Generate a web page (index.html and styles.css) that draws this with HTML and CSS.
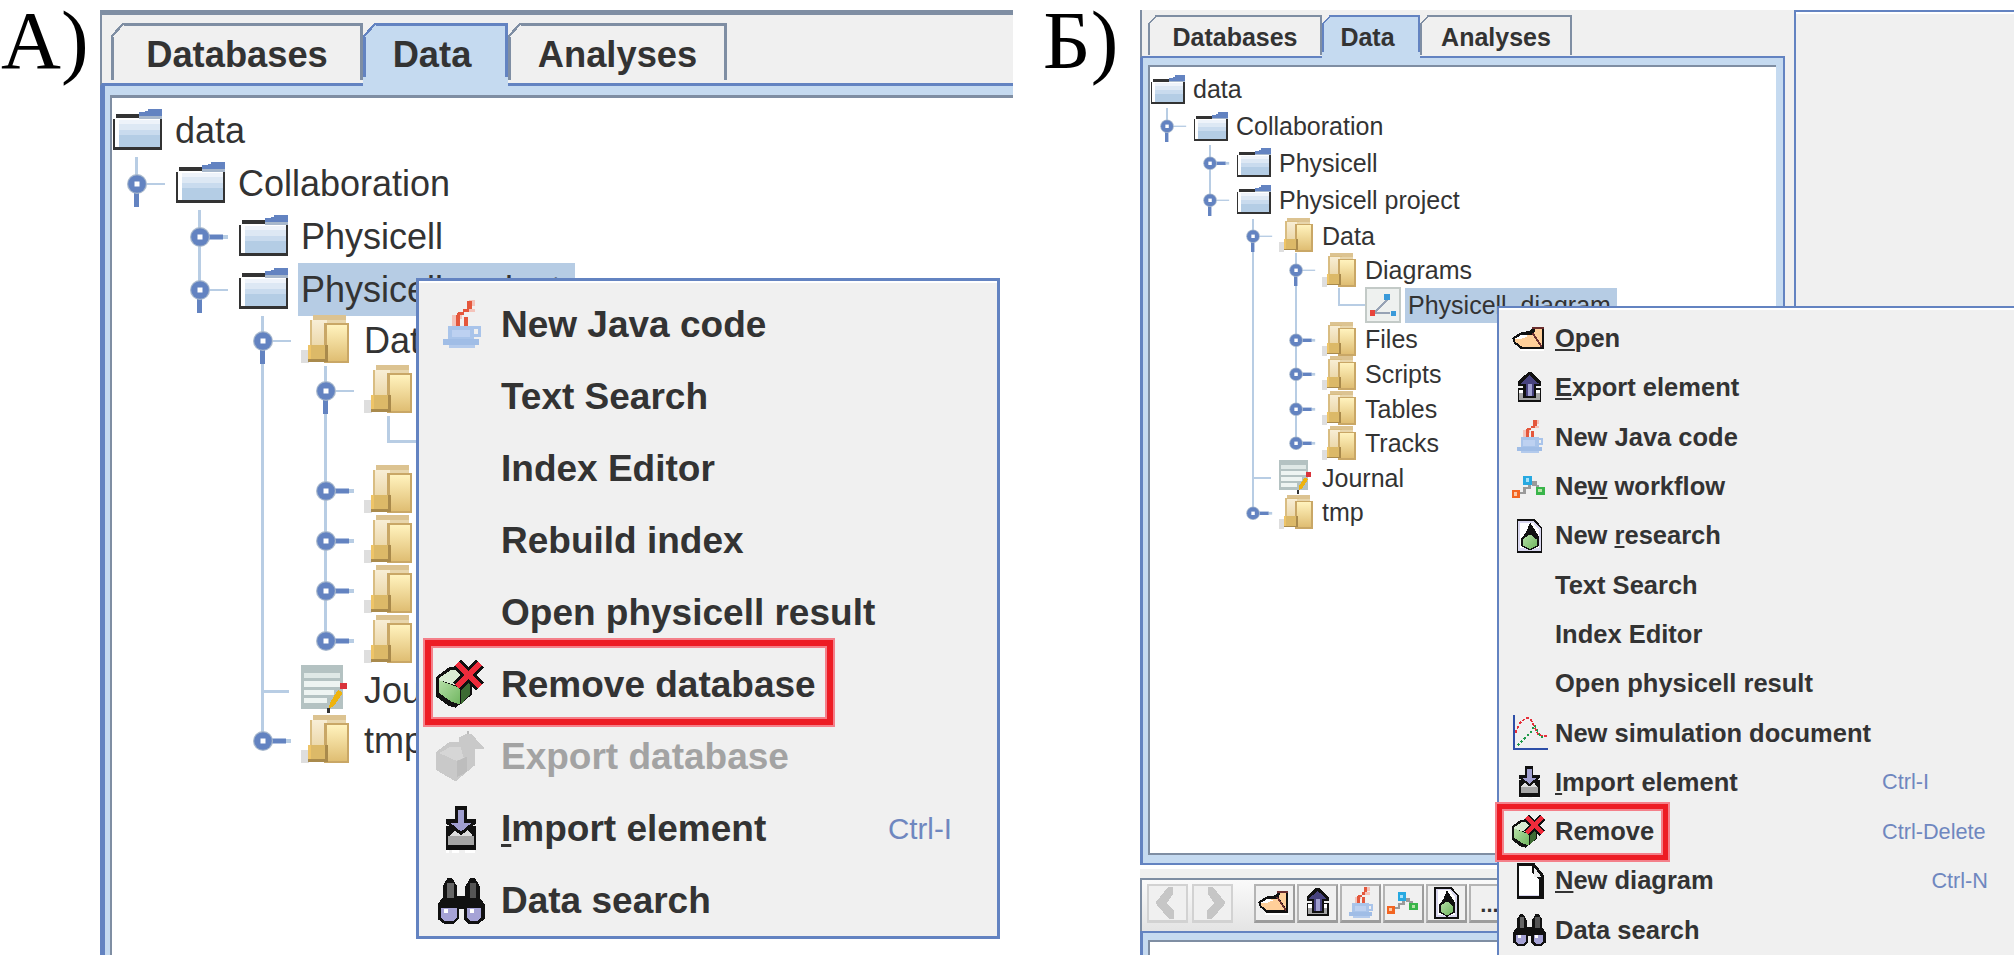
FILE: index.html
```html
<!DOCTYPE html>
<html lang="ru">
<head>
    <meta charset="UTF-8">
    <title>Удаление базы данных и элемента</title>
    <link rel="stylesheet" href="styles.css">
</head>
<body>

<!-- icons, drawn on a 16x16 grid like the original swing icons -->
<svg class="sprite" xmlns="http://www.w3.org/2000/svg">
    <defs>
        <linearGradient id="g-front" x1="0" y1="0" x2="0" y2="1">
            <stop offset="0" stop-color="#fff2bd"/>
            <stop offset="1" stop-color="#dfbd72"/>
        </linearGradient>
        <linearGradient id="g-back" x1="0" y1="0" x2="0" y2="1">
            <stop offset="0" stop-color="#f8eed6"/>
            <stop offset="1" stop-color="#e6cd94"/>
        </linearGradient>
        <linearGradient id="g-green" x1="0" y1="0" x2="1" y2="1">
            <stop offset="0" stop-color="#b5dfa6"/>
            <stop offset="1" stop-color="#6fb55f"/>
        </linearGradient>
    </defs>
    <symbol id="i-db" viewBox="0 0 16 16">
        <path fill="#333" d="M.3 4.600h1V3.200h7.500v1.400h6.500v9.400H.3z"/>
        <rect x="1" y="4.400" width="13.600" height="8.900" fill="#fff"/>
        <rect x="2" y="5" width="12.600" height="1" fill="#eef3fa"/>
        <rect x="2" y="6" width="12.600" height="2" fill="#dde8f4"/>
        <rect x="2" y="8" width="12.600" height="1.600" fill="#c9dbee"/>
        <rect x="2" y="9.600" width="12.600" height="3.700" fill="#b4cde5"/>
        <path fill="#a8b8cc" d="M8.400 3.600h6.900v1h-6.900z"/>
        <path fill="#6383c1" d="M8.400 3.800v-1.200h1.600v-.6h1v-.6h4.300v2.400z"/>
    </symbol>
    <symbol id="i-folder" viewBox="0 0 16 16">
        <rect x="-.3" y="10.800" width="2.700" height="4" fill="#dedede"/>
        <rect x="3.600" y="0" width="10.200" height="1.600" fill="#dcc391"/>
        <rect x="2.800" y="1.400" width="6" height="12.400" fill="#d9bd82"/>
        <rect x="3.500" y="1.600" width="5" height="12" fill="url(#g-back)"/>
        <rect x="8" y="1.600" width="5.800" height="1" fill="#e8d6ac"/>
        <rect x="7.100" y="2.500" width="7.700" height="12.300" fill="#c9a766"/>
        <rect x="7.900" y="3.200" width="6.200" height="11" fill="url(#g-front)"/>
        <rect x="2.200" y="9.200" width="6" height="5.100" fill="#a98a4c"/>
        <rect x="2.200" y="9.200" width="5.300" height="4.400" fill="#dcb968"/>
        <rect x="2.200" y="9.200" width="1" height="4.400" fill="#eec467"/>
    </symbol>
    <symbol id="i-journal" viewBox="0 0 16 16">
        <rect x="0" y="0" width="13" height="13.400" fill="#b4c2c2"/>
        <rect x="1" y="2.400" width="11" height="1.600" fill="#dfe8e6"/>
        <rect x="1" y="5" width="11" height="1.600" fill="#eef4f2"/>
        <rect x="1" y="7.600" width="9" height="1.600" fill="#eef4f2"/>
        <rect x="1" y="10.200" width="7" height="1.600" fill="#eef4f2"/>
        <path fill="#eeb30e" d="M8.800 11.600l2.600-4 1.400.9-2.600 4-1.600 1z"/>
        <path fill="#333" d="M8 13.200h1v1.600H8z"/>
        <rect x="12" y="5.400" width="2" height="2" fill="#d9343b"/>
    </symbol>
    <symbol id="i-diagram" viewBox="0 0 16 16">
        <rect x=".5" y=".5" width="15" height="15" fill="#eef1ef" stroke="#c3cac7"/>
        <path d="M4 11.500L10.500 5M4 11.500h7" fill="none" stroke="#97a3b5"/>
        <rect x="8.600" y="3.200" width="2.600" height="2.600" fill="#3a9ad9"/>
        <rect x="2.400" y="10" width="2" height="3" fill="#e8453c"/>
        <rect x="11.600" y="10.400" width="2.200" height="2.200" fill="#3a9ad9"/>
    </symbol>
    <symbol id="i-java" viewBox="0 0 16 16">
        <path fill="#f4c3ba" d="M5 5h3v1H7v3H5zM10 .3h2v2h-2zM10 3h2v1h-2z"/>
        <path fill="#e4573c" d="M9.400 .6h1.600v2.400h-1v1H8.600v1H7.400v4H6V5.200l1-1.200h1.400v-1h1z"/>
        <rect x="8.600" y="5.400" width="1.200" height="3.600" fill="#e4573c"/>
        <rect x="3.800" y="8.200" width="8" height="5" fill="#a9c4ea"/>
        <rect x="5" y="9.400" width="5.400" height="2.400" fill="#bdd1f1"/>
        <path d="M11.800 8.800h1.500v2.400h-1.500" fill="none" stroke="#a9c4ea"/>
        <rect x="2.200" y="12.400" width="11" height="1.600" fill="#a0bde6"/>
        <rect x="4" y="14" width="8" height="1" fill="#b3caec"/>
    </symbol>
    <symbol id="i-remove" viewBox="0 0 16 16">
        <path fill="#111" d="M0 5.500l4-3h5l2 4v4.500l-5 4-2-.5-4-3z"/>
        <path fill="#d8ecd2" d="M1 5.800l3.500-2.300h4l-1 5-6.500-2z"/>
        <path fill="url(#g-green)" d="M1 6.500l6.500 2.500v5L4.500 13 1 10.500z"/>
        <path fill="#3d6b33" d="M7.800 9l2.800-2v3.800l-2.800 3z"/>
        <path d="M6.500 1.500l7 7M13.500 1.500l-7 7" stroke="#111" stroke-width="3.400" fill="none"/>
        <path d="M6.500 1.500l7 7M13.500 1.500l-7 7" stroke="#ee2b3b" stroke-width="1.800" fill="none"/>
    </symbol>
    <symbol id="i-export-off" viewBox="0 0 16 16">
        <path fill="#c9c9c9" d="M0 6.500l4-3h3V2l2-1h2l4 4.500h-3v5l-6 5-6-3.500z"/>
        <path fill="#d6d6d6" d="M1 6.800l3.500-2h3l1 3.400-2.200 1z"/>
        <path fill="#bdbdbd" d="M6.400 9.300l3-1.300v4.600l-3 1.600z"/>
        <rect x="9.400" y="-1" width=".8" height="2" fill="#bbb"/>
    </symbol>
    <symbol id="i-import" viewBox="0 0 16 16">
        <rect x="3" y="7" width="9.400" height="7.500" fill="#111"/>
        <rect x="3.800" y="10.200" width="7.800" height="2.600" fill="#a6a6a6"/>
        <path fill="#ddd" d="M4 10.200l1.800-1.800h4l1.600 1.800z"/>
        <path fill="#111" d="M5.900 1h3.600v4h2.900v1.200l-4.700 3.800-4.700-3.800V5h2.900z"/>
        <path fill="#a09fd0" d="M6.700 2h2v4h2.400l-3.400 2.800-3.400-2.800h2.400z"/>
        <rect x="3" y="14.500" width="1" height=".8" fill="#fff"/>
        <rect x="5" y="14.500" width="2" height=".8" fill="#fff"/>
        <rect x="9" y="14.500" width="3" height=".8" fill="#fff"/>
    </symbol>
    <symbol id="i-search" viewBox="0 0 16 16">
        <path fill="#111" d="M2 3.500L3.500 1H5l1.500 2.500v3H9v-3L10.500 1H12l1.500 2.500V7l1.500 2v4.500L13 15h-3L8.500 13.500V10.500H7V13.500L5.500 15h-3L.5 13.500V9L2 7z"/>
        <rect x="3.400" y="2.400" width="2" height="4.600" fill="#666"/>
        <rect x="10.400" y="2.400" width="2" height="4.600" fill="#555"/>
        <path fill="#a6a3d6" d="M1.600 10h4.800v3l-1 1H2.600l-1-1zM9.600 10h4.200v3l-1 1H10.600l-1-1z"/>
        <rect x="2.600" y="10.400" width="1.200" height="1.200" fill="#fff"/>
        <rect x="10.400" y="10.400" width="1.200" height="1.200" fill="#fff"/>
    </symbol>
    <symbol id="i-open" viewBox="0 0 16 16">
        <path fill="#111" d="M0 7.500l4-2.500 4-.6L10 2.500h4v10H4L1 10z"/>
        <path fill="#ffcf99" d="M1.500 7.800l3-1.800h5L13 11.500H4.500l-3-2.200z"/>
        <path fill="#fff" d="M1.500 7.800l3-1.800 3 .6-3 1.200z"/>
        <path fill="#ffcf99" d="M10.400 3.300h2.800v7.400L9.800 5.500z"/>
        <path fill="#6b2f2f" d="M8.800 2.500H14v1H8.800z"/>
        <path d="M9 5.200l4.200 6.300" fill="none" stroke="#6b2f2f" stroke-width=".8"/>
        <rect x="3.400" y="12.500" width="11" height="1" fill="#fff"/>
    </symbol>
    <symbol id="i-export" viewBox="0 0 16 16">
        <rect x="2.600" y="8" width="10.400" height="6" fill="#111"/>
        <rect x="3.300" y="10.400" width="9" height="2.800" fill="#a6a6a6"/>
        <rect x="3.300" y="8.700" width="9" height="1.700" fill="#fff"/>
        <path fill="#111" d="M7 1h1.600L13 5.400V7H10.600v5.600H5V7H2.600V5.400z"/>
        <path fill="#48437f" d="M7.800 2.200L11.800 6H9.800v5.600H6V6H3.800z"/>
        <path fill="#a09fd0" d="M7 6h1.800v5.600H7z"/>
    </symbol>
    <symbol id="i-workflow" viewBox="0 0 16 16">
        <path fill="#9a9a9a" d="M3 10h2V8h2V6h1.500v3H6v2H3zM9 5.500h2V7h1v2h-1.500V7.500H9z"/>
        <rect x="5" y="3" width="3.800" height="4" fill="#27a9e1"/>
        <rect x="6.200" y="4.200" width="1.400" height="1.400" fill="#a6e1fa"/>
        <rect x="0" y="9.300" width="3.600" height="3.700" fill="#f26522"/>
        <rect x="1" y="10.400" width="1.400" height="1.400" fill="#fbc9a6"/>
        <rect x="10.500" y="7.800" width="4.100" height="3.700" fill="#39b54a"/>
        <rect x="11.700" y="9" width="1.600" height="1.300" fill="#b7e3a8"/>
    </symbol>
    <symbol id="i-research" viewBox="0 0 16 16">
        <path fill="#111" d="M2 .4h8l3.500 4v11.200H2z"/>
        <path fill="#d8d6ee" d="M2.800 1.200h6.600l3.300 3.500v10H2.800z"/>
        <path fill="#fff" d="M3.600 2h5.600l2.700 3v8.500H3.600z"/>
        <path fill="#111" d="M8 2l2 3 1.800 3v4.500l-3.800 2-3.800-2V9l2-2.600z"/>
        <path fill="url(#g-green)" d="M5 9.200l3-2 3 2.400v2.600l-3 1.600-3-1.600z"/>
    </symbol>
    <symbol id="i-sim" viewBox="0 0 16 16">
        <path d="M.8 0v15.200h15" fill="none" stroke="#2e4fa8" stroke-width="1"/>
        <path d="M1.500 8l2-4.500 2.500-2h2l1.500 3 2 4 2 1h2" fill="none" stroke="#e5303a" stroke-width=".8" stroke-dasharray="1.400 .7"/>
        <path d="M2.500 13.500l3-3 3-3 1.500-3 1.500 3 1 2 2 .8" fill="none" stroke="#1f9a4a" stroke-width=".8" stroke-dasharray="1 1"/>
    </symbol>
    <symbol id="i-page" viewBox="0 0 16 16">
        <path fill="#111" d="M2 .2h8l4 5v10.600H2z"/>
        <path fill="#fff" d="M3 1.200h5.800V4l3 3v7.800H3z"/>
        <path fill="#d8d6ee" d="M3 14h9v.800H3z"/>
        <path fill="#eee" d="M9.600 1.600l3.400 4.400H9.600z"/>
    </symbol>
    <symbol id="i-back" viewBox="0 0 16 16">
        <path fill="#c6c6c6" d="M8 .5h2.500v3L7.500 8l3.500 3.500v4H8.500L2 8z"/>
    </symbol>
    <symbol id="i-next" viewBox="0 0 16 16">
        <path fill="#c6c6c6" d="M8 .5H5.500v3L8.500 8 5 11.500v4h2.500L14 8z"/>
    </symbol>
    <symbol id="h-open" viewBox="0 0 63 50" preserveAspectRatio="xMinYMid meet">
        <rect x="35" y="24" width="18" height="2" fill="#b8cde4"/>
        <rect x="22" y="33" width="5" height="15" fill="#6383c1"/>
        <circle cx="25" cy="25" r="10" fill="#a8b8cc"/>
        <circle cx="25" cy="25" r="8.800" fill="#6383c1"/>
        <rect x="22.500" y="22.500" width="5" height="5" fill="#fff"/>
    </symbol>
    <symbol id="h-closed" viewBox="0 0 63 50" preserveAspectRatio="xMinYMid meet">
        <rect x="34" y="22.500" width="14" height="5" fill="#6383c1"/>
        <rect x="48" y="23" width="5" height="4" fill="#b8cde4"/>
        <circle cx="25" cy="25" r="10" fill="#a8b8cc"/>
        <circle cx="25" cy="25" r="8.800" fill="#6383c1"/>
        <rect x="22.500" y="22.500" width="5" height="5" fill="#fff"/>
    </symbol>
</svg>

<section class="fig fig-a">
    <div class="letter">А)</div>
    <div class="panel">
        <div class="tabs">
            <div class="tab">Databases</div>
            <div class="tab on">Data</div>
            <div class="tab">Analyses</div>
        </div>
        <div class="pane">
            <div class="tree">
                <div class="row db"><svg class="ico"><use href="#i-db"/></svg><span>data</span></div>
                <div class="row db"><i class="c up"><svg><use href="#h-open"/></svg></i><svg class="ico"><use href="#i-db"/></svg><span>Collaboration</span></div>
                <div class="row db"><i class="c"></i><i class="c thru"><svg><use href="#h-closed"/></svg></i><svg class="ico"><use href="#i-db"/></svg><span>Physicell</span></div>
                <div class="row db"><i class="c"></i><i class="c up"><svg><use href="#h-open"/></svg></i><svg class="ico"><use href="#i-db"/></svg><span class="sel">Physicell project</span></div>
                <div class="row"><i class="c"></i><i class="c"></i><i class="c thru"><svg><use href="#h-open"/></svg></i><svg class="ico"><use href="#i-folder"/></svg><span>Data</span></div>
                <div class="row"><i class="c"></i><i class="c"></i><i class="c thru"></i><i class="c thru"><svg><use href="#h-open"/></svg></i><svg class="ico"><use href="#i-folder"/></svg><span>Diagrams</span></div>
                <div class="row"><i class="c"></i><i class="c"></i><i class="c thru"></i><i class="c thru"></i><i class="c elbow"></i><svg class="ico"><use href="#i-diagram"/></svg><span>Physicell_diagram</span></div>
                <div class="row"><i class="c"></i><i class="c"></i><i class="c thru"></i><i class="c thru"><svg><use href="#h-closed"/></svg></i><svg class="ico"><use href="#i-folder"/></svg><span>Files</span></div>
                <div class="row"><i class="c"></i><i class="c"></i><i class="c thru"></i><i class="c thru"><svg><use href="#h-closed"/></svg></i><svg class="ico"><use href="#i-folder"/></svg><span>Scripts</span></div>
                <div class="row"><i class="c"></i><i class="c"></i><i class="c thru"></i><i class="c thru"><svg><use href="#h-closed"/></svg></i><svg class="ico"><use href="#i-folder"/></svg><span>Tables</span></div>
                <div class="row"><i class="c"></i><i class="c"></i><i class="c thru"></i><i class="c up"><svg><use href="#h-closed"/></svg></i><svg class="ico"><use href="#i-folder"/></svg><span>Tracks</span></div>
                <div class="row"><i class="c"></i><i class="c"></i><i class="c thru tee"></i><svg class="ico"><use href="#i-journal"/></svg><span>Journal</span></div>
                <div class="row"><i class="c"></i><i class="c"></i><i class="c up"><svg><use href="#h-closed"/></svg></i><svg class="ico"><use href="#i-folder"/></svg><span>tmp</span></div>
            </div>
        </div>
    </div>

    <div class="menu">
        <div class="item"><svg class="ico"><use href="#i-java"/></svg><span>New Java code</span></div>
        <div class="item"><span class="noicon">Text Search</span></div>
        <div class="item"><span class="noicon">Index Editor</span></div>
        <div class="item"><span class="noicon">Rebuild index</span></div>
        <div class="item"><span class="noicon">Open physicell result</span></div>
        <div class="item"><svg class="ico"><use href="#i-remove"/></svg><span>Remove database</span><b class="mark"></b></div>
        <div class="item off"><svg class="ico"><use href="#i-export-off"/></svg><span>Export database</span></div>
        <div class="item"><svg class="ico"><use href="#i-import"/></svg><span><u>I</u>mport element</span><em class="key">Ctrl-I</em></div>
        <div class="item"><svg class="ico"><use href="#i-search"/></svg><span>Data search</span></div>
    </div>
</section>

<section class="fig fig-b">
    <div class="letter">Б)</div>
    <div class="panel">
        <div class="left">
            <div class="tabs">
                <div class="tab">Databases</div>
                <div class="tab on">Data</div>
                <div class="tab">Analyses</div>
            </div>
            <div class="pane">
                <div class="tree">
                    <div class="row db"><svg class="ico"><use href="#i-db"/></svg><span>data</span></div>
                    <div class="row db"><i class="c up"><svg><use href="#h-open"/></svg></i><svg class="ico"><use href="#i-db"/></svg><span>Collaboration</span></div>
                    <div class="row db"><i class="c"></i><i class="c thru"><svg><use href="#h-closed"/></svg></i><svg class="ico"><use href="#i-db"/></svg><span>Physicell</span></div>
                    <div class="row db"><i class="c"></i><i class="c up"><svg><use href="#h-open"/></svg></i><svg class="ico"><use href="#i-db"/></svg><span>Physicell project</span></div>
                    <div class="row"><i class="c"></i><i class="c"></i><i class="c thru"><svg><use href="#h-open"/></svg></i><svg class="ico"><use href="#i-folder"/></svg><span>Data</span></div>
                    <div class="row"><i class="c"></i><i class="c"></i><i class="c thru"></i><i class="c thru"><svg><use href="#h-open"/></svg></i><svg class="ico"><use href="#i-folder"/></svg><span>Diagrams</span></div>
                    <div class="row"><i class="c"></i><i class="c"></i><i class="c thru"></i><i class="c thru"></i><i class="c elbow"></i><svg class="ico"><use href="#i-diagram"/></svg><span class="sel">Physicell_diagram</span></div>
                    <div class="row"><i class="c"></i><i class="c"></i><i class="c thru"></i><i class="c thru"><svg><use href="#h-closed"/></svg></i><svg class="ico"><use href="#i-folder"/></svg><span>Files</span></div>
                    <div class="row"><i class="c"></i><i class="c"></i><i class="c thru"></i><i class="c thru"><svg><use href="#h-closed"/></svg></i><svg class="ico"><use href="#i-folder"/></svg><span>Scripts</span></div>
                    <div class="row"><i class="c"></i><i class="c"></i><i class="c thru"></i><i class="c thru"><svg><use href="#h-closed"/></svg></i><svg class="ico"><use href="#i-folder"/></svg><span>Tables</span></div>
                    <div class="row"><i class="c"></i><i class="c"></i><i class="c thru"></i><i class="c up"><svg><use href="#h-closed"/></svg></i><svg class="ico"><use href="#i-folder"/></svg><span>Tracks</span></div>
                    <div class="row"><i class="c"></i><i class="c"></i><i class="c thru tee"></i><svg class="ico"><use href="#i-journal"/></svg><span>Journal</span></div>
                    <div class="row"><i class="c"></i><i class="c"></i><i class="c up"><svg><use href="#h-closed"/></svg></i><svg class="ico"><use href="#i-folder"/></svg><span>tmp</span></div>
                </div>
            </div>
            <div class="gap"></div>
            <div class="toolbar">
                <div class="btn dis"><svg class="ico"><use href="#i-back"/></svg></div>
                <div class="btn dis"><svg class="ico"><use href="#i-next"/></svg></div>
                <div class="btn first"><svg class="ico"><use href="#i-open"/></svg></div>
                <div class="btn"><svg class="ico"><use href="#i-export"/></svg></div>
                <div class="btn"><svg class="ico"><use href="#i-java"/></svg></div>
                <div class="btn"><svg class="ico"><use href="#i-workflow"/></svg></div>
                <div class="btn"><svg class="ico"><use href="#i-research"/></svg></div>
                <div class="btn more">...</div>
            </div>
            <div class="pane lower"><div class="tree"></div></div>
        </div>
        <div class="right"></div>
    </div>

    <div class="menu">
        <div class="item"><svg class="ico"><use href="#i-open"/></svg><span><u>O</u>pen</span></div>
        <div class="item"><svg class="ico"><use href="#i-export"/></svg><span><u>E</u>xport element</span></div>
        <div class="item"><svg class="ico"><use href="#i-java"/></svg><span>New Java code</span></div>
        <div class="item"><svg class="ico"><use href="#i-workflow"/></svg><span>Ne<u>w</u> workflow</span></div>
        <div class="item"><svg class="ico"><use href="#i-research"/></svg><span>New <u>r</u>esearch</span></div>
        <div class="item"><span class="noicon">Text Search</span></div>
        <div class="item"><span class="noicon">Index Editor</span></div>
        <div class="item"><span class="noicon">Open physicell result</span></div>
        <div class="item"><svg class="ico"><use href="#i-sim"/></svg><span>New simulation document</span></div>
        <div class="item"><svg class="ico"><use href="#i-import"/></svg><span><u>I</u>mport element</span><em class="key">Ctrl-I</em></div>
        <div class="item"><svg class="ico"><use href="#i-remove"/></svg><span>Remove</span><em class="key">Ctrl-Delete</em><b class="mark"></b></div>
        <div class="item"><svg class="ico"><use href="#i-page"/></svg><span><u>N</u>ew diagram</span><em class="key end">Ctrl-N</em></div>
        <div class="item"><svg class="ico"><use href="#i-search"/></svg><span>Data search</span></div>
    </div>
</section>

</body>
</html>
```

FILE: styles.css
```css
html, body {
    margin: 0;
    height: 100%;
}
body {
    display: flex;
    width: 2014px;
    height: 955px;
    overflow: hidden;
    background-color: #fff;
    font-family: "Liberation Sans", Arial, sans-serif;
    color: #333;
}
.sprite {
    position: absolute;
    width: 0;
    height: 0;
}
.ico {
    flex: none;
    display: block;
    shape-rendering: crispEdges;
    overflow: visible;
}

/* the two figures share markup, sizes differ */
.fig {
    position: relative;
    display: flex;
    height: 955px;
}
.fig-a {
    --grey: #7f8ea3;
    --blue: #6383c1;
    --pale: #c5daf0;
    --line: #b8cde4;
    --cell: 63px;
    --row: 50px;
    --row-db: 53px;
    --mid: 23px;
    --w: 3px;
    --sx: 13px;
    --sy: 14px;
    --t: 3px;
    font-size: 36px;
    width: 1013px;
}
.fig-b {
    --grey: #7f8ea3;
    --blue: #6383c1;
    --pale: #c5daf0;
    --line: #b8cde4;
    --cell: 43px;
    --row: 34.6px;
    --row-db: 36.8px;
    --mid: 16px;
    --w: 2px;
    --sx: 9px;
    --sy: 10px;
    --t: 2px;
    font-size: 25px;
    flex: 1;
}
.fig .ico {
    width: 1.45em;
    height: 1.45em;
}

.letter {
    flex: none;
    font-family: "Liberation Serif", "Times New Roman", serif;
    font-size: 83px;
    line-height: 80px;
    color: #000;
    box-sizing: border-box;
}
.fig-a .letter {
    width: 100px;
    padding-left: 1px;
}
.fig-b .letter {
    width: 127px;
    padding-left: 30px;
}

.panel {
    flex: 1;
    display: flex;
    flex-direction: column;
    margin-top: 10px;
    background-color: #f0f0f0;
}
.fig-a .panel {
    border-top: 5px solid var(--grey);
}
.fig-b .panel {
    flex-direction: row;
    gap: 9px;
}
.left {
    width: 645px;
    display: flex;
    flex-direction: column;
}
.right {
    flex: 1;
    border-left: 2px solid var(--blue);
    border-top: 2px solid var(--blue);
    box-shadow: inset 0 2px 0 #fff;
}

/* tabs */
.tabs {
    flex: none;
    display: grid;
    align-items: start;
    box-sizing: border-box;
    border-left: 2px solid var(--grey);
    border-bottom: var(--t) solid var(--blue);
    font-weight: bold;
}
.fig-a .tabs {
    grid-template-columns: 252px 145px 219px;
    height: 71px;
    padding: 8px 0 0 9px;
    font-size: 36.3px;
}
.fig-b .tabs {
    grid-template-columns: 174px 98px 152px;
    height: 48px;
    padding: 5px 0 0 6px;
}
.tab {
    --c: var(--grey);
    display: flex;
    justify-content: center;
    box-sizing: border-box;
    background:
        linear-gradient(var(--c), var(--c)) var(--sx) 0 / 100% var(--t) no-repeat,
        linear-gradient(to bottom right, transparent 44%, var(--c) 44%, var(--c) 56%, transparent 56%) 0 0 / var(--sx) var(--sy) no-repeat,
        linear-gradient(var(--c), var(--c)) 0 var(--sy) / var(--t) 100% no-repeat,
        linear-gradient(var(--c), var(--c)) 100% 0 / var(--t) 100% no-repeat;
}
.fig-a .tab {
    height: 57px;
    padding-top: 11px;
}
.fig-b .tab {
    height: 40px;
    padding-top: 8px;
}
.fig .tab.on {
    --c: var(--blue);
    padding-right: 7px;
    background:
        linear-gradient(var(--c), var(--c)) var(--sx) 0 / 100% var(--t) no-repeat,
        linear-gradient(to bottom right, transparent 44%, var(--c) 44%, var(--c) 56%, transparent 56%) 0 0 / var(--sx) var(--sy) no-repeat,
        linear-gradient(var(--c), var(--c)) 0 var(--sy) / var(--t) calc(100% - 3 * var(--t) - var(--sy)) no-repeat,
        linear-gradient(var(--c), var(--c)) 100% 0 / var(--t) calc(100% - 3 * var(--t)) no-repeat,
        linear-gradient(to bottom right, transparent 50%, var(--pale) 50%) 0 0 / var(--sx) var(--sy) no-repeat,
        linear-gradient(var(--pale), var(--pale)) var(--sx) 0 / 100% var(--sy) no-repeat,
        linear-gradient(var(--pale), var(--pale)) 0 var(--sy) / 100% 100% no-repeat;
}
.fig-a .tab.on {
    height: 63px;
}
.fig-b .tab.on {
    height: 43px;
}

/* tabbed pane around the tree */
.pane {
    flex: 1;
    display: flex;
    min-height: 0;
    background-color: var(--pale);
    border-left: 5px solid var(--blue);
    padding: 9px 0 0 5px;
}
.fig-b .pane {
    flex: none;
    height: 807px;
    box-sizing: border-box;
    border-left-width: 3px;
    border-right: 2px solid var(--blue);
    border-bottom: 2px solid var(--blue);
    padding: 7px 7px 8px 5px;
}
.tree {
    flex: 1;
    background-color: #fff;
    border-left: 2px solid var(--grey);
    border-top: 3px solid var(--grey);
    padding-top: 6px;
    overflow: hidden;
}
.fig-b .tree {
    border-top-width: 2px;
    border-bottom: 2px solid var(--grey);
    padding-top: 4.6px;
}
.row {
    display: flex;
    align-items: center;
    height: var(--row);
    white-space: nowrap;
}
.row.db {
    height: var(--row-db);
}
.row .ico {
    margin-right: calc(var(--cell) - 1.45em);
}
.sel {
    align-self: stretch;
    display: flex;
    align-items: center;
    margin-left: -3px;
    padding: 0 14px 0 3px;
    background-color: #b6cce4;
}
.fig-b .sel {
    padding-right: 6px;
}

/* tree connector cells */
.c {
    flex: none;
    display: flex;
    align-items: center;
    align-self: stretch;
    width: var(--cell);
    background-repeat: no-repeat;
}
.c svg {
    display: block;
    width: var(--cell);
    height: var(--row);
}
.thru {
    background-image: linear-gradient(var(--line), var(--line));
    background-position: var(--mid) 0;
    background-size: var(--w) 100%;
}
.up {
    background-image: linear-gradient(var(--line), var(--line));
    background-position: var(--mid) -8%;
    background-size: var(--w) 62%;
}
.tee {
    background-image: linear-gradient(var(--line), var(--line)), linear-gradient(var(--line), var(--line));
    background-position: var(--mid) 0, var(--mid) 50%;
    background-size: var(--w) 100%, 45% var(--w);
}
.elbow {
    background-image: linear-gradient(var(--line), var(--line)), linear-gradient(var(--line), var(--line));
    background-position: var(--mid) 0, var(--mid) 50%;
    background-size: var(--w) 50%, 70% var(--w);
}

/* popup menus */
.menu {
    position: absolute;
    background-color: #f0f0f0;
    border: 3px solid var(--blue);
    box-shadow: inset 0 2px 0 #fff;
    box-sizing: border-box;
    font-weight: bold;
    white-space: nowrap;
}
.fig-a .menu {
    left: 416px;
    top: 278px;
    width: 584px;
    height: 661px;
    padding-top: 8px;
    font-size: 37px;
}
.fig-b .menu {
    left: 484px;
    top: 306px;
    right: 0;
    bottom: 0;
    border-width: 2px 0 0 2px;
    padding-top: 6px;
    font-size: 25.5px;
}
.item {
    position: relative;
    display: flex;
    align-items: center;
}
.fig-a .item {
    height: 72px;
    padding-left: 17px;
}
.fig-b .item {
    height: 49.3px;
    padding-left: 13px;
}
.fig .item .ico {
    width: 52px;
    height: 52px;
    margin-right: 13px;
}
.fig-b .item .ico {
    width: 36px;
    height: 36px;
    margin-right: 7px;
}
.noicon {
    margin-left: 65px;
}
.fig-b .noicon {
    margin-left: 43px;
}
.off {
    color: #a3a3a3;
}
.item u {
    text-decoration-thickness: 3px;
    text-underline-offset: 3px;
}
.fig-b .item u {
    text-decoration-thickness: 2px;
    text-underline-offset: 2px;
}
.key {
    position: absolute;
    font-style: normal;
    font-weight: normal;
    color: #6f87bf;
}
.fig-a .key {
    left: 469px;
    font-size: 29.5px;
}
.fig-b .key {
    left: 383px;
    width: 106px;
    font-size: 21.7px;
}
.key.end {
    text-align: right;
}
.mark {
    position: absolute;
    border: 6px solid #ed1c24;
    box-shadow: 0 0 0 2px #f4808a, inset 0 0 0 2px #f4808a;
    box-sizing: border-box;
}
.fig-a .mark {
    left: 6px;
    top: -9px;
    bottom: -4px;
    width: 408px;
}
.fig-b .mark {
    left: -2px;
    top: -3px;
    bottom: -4px;
    width: 171px;
    border-width: 5px;
}

/* toolbar under the tree */
.gap {
    height: 13px;
    flex: none;
    background: linear-gradient(#fff 4px, #f0f0f0 4px);
}
.toolbar {
    flex: none;
    display: flex;
    height: 53px;
    box-sizing: border-box;
    gap: 2px;
    padding: 4px 0 0 5px;
    border-top: 2px solid var(--grey);
    border-left: 2px solid var(--grey);
    background: linear-gradient(#fafafa, #e4e4e4);
    overflow: hidden;
}
.btn {
    flex: none;
    width: 41px;
    height: 39px;
    box-sizing: border-box;
    display: flex;
    align-items: center;
    justify-content: center;
    background-color: #f0f0f0;
    border-style: solid;
    border-width: 2px 2px 3px 2px;
    border-color: #b4b4b4 #9c9c9c #9c9c9c #b4b4b4;
}
.toolbar .btn .ico {
    width: 34px;
    height: 34px;
}
.btn.dis {
    border-color: #d2d2d2;
    margin-right: 2px;
}
.btn.first {
    margin-left: 17px;
}
.btn.more {
    font-size: 22px;
    align-items: flex-end;
    padding-bottom: 2px;
    font-weight: bold;
}
.fig-b .pane.lower {
    flex: 1;
    height: auto;
    border-top: 2px solid var(--blue);
    border-right: 0;
    border-bottom: 0;
    padding: 7px 0 0 5px;
}
.fig-b .pane.lower .tree {
    border-bottom: 0;
}
```
